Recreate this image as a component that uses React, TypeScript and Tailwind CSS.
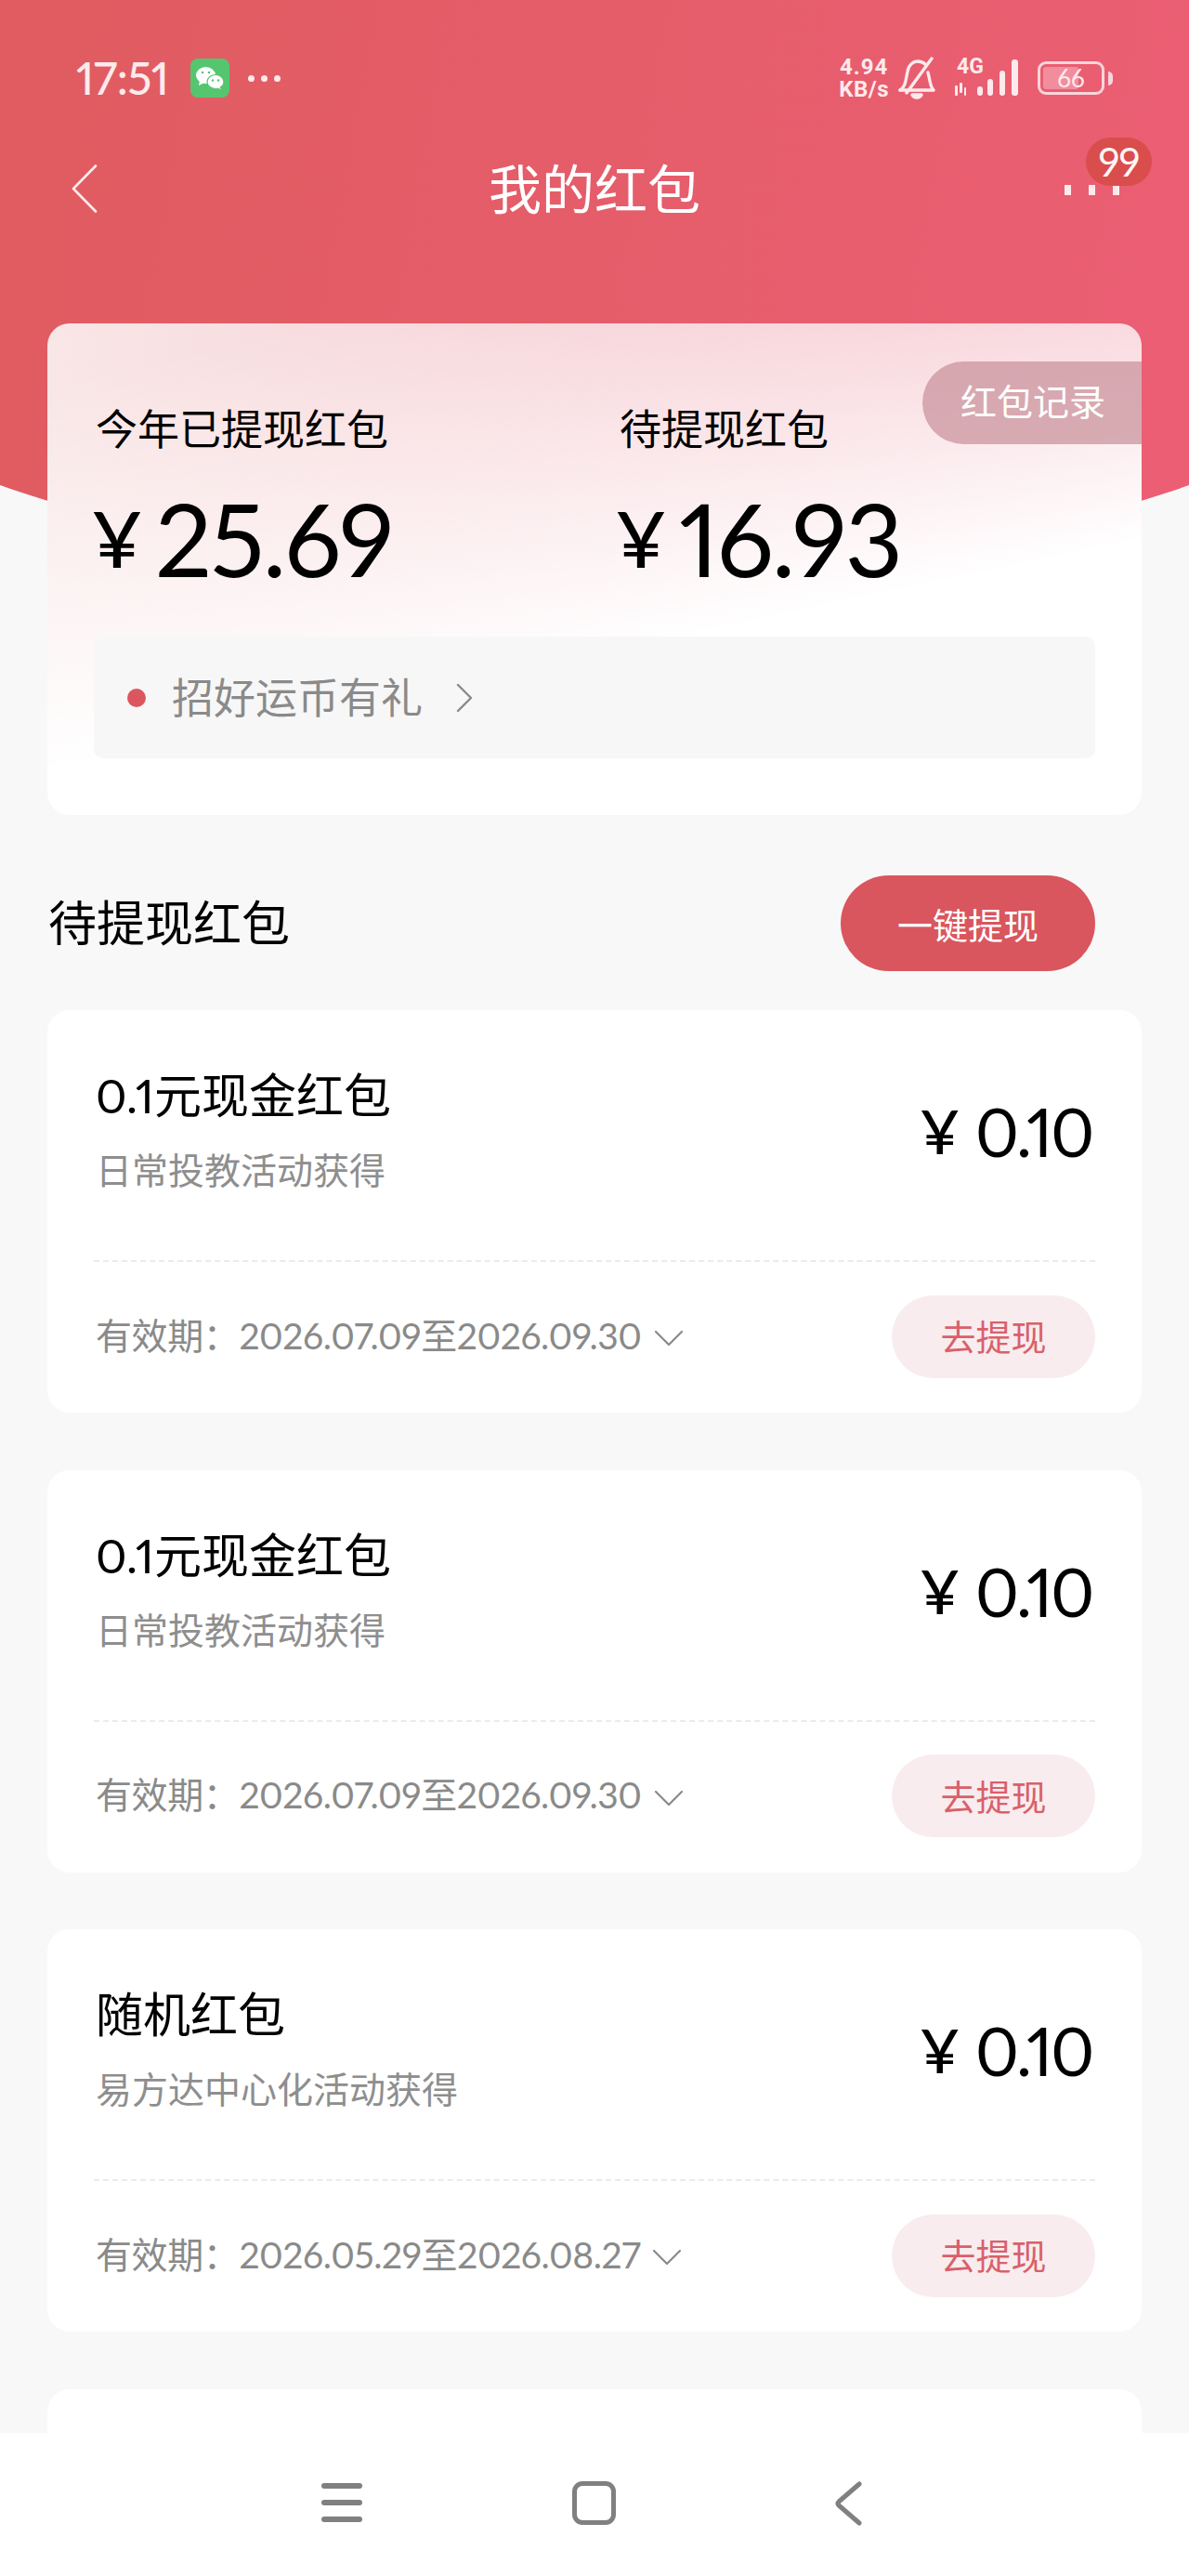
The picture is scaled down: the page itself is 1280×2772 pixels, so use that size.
const latin = "font-['Lato','Noto_Sans_CJK_SC',sans-serif] proportional-nums";

const packets = [
  { name: "0.1元现金红包", source: "日常投教活动获得", period: "2026.07.09至2026.09.30" },
  { name: "0.1元现金红包", source: "日常投教活动获得", period: "2026.07.09至2026.09.30" },
  { name: "随机红包", source: "易方达中心化活动获得", period: "2026.05.29至2026.08.27" },
];

function WeChatIcon() {
  return (
    <svg viewBox="0 0 42 42" className="size-[42px]">
      <rect width="42" height="42" rx="8" fill="#55c66f" />
      <ellipse cx="16.5" cy="18" rx="10.5" ry="9" fill="#fff" />
      <path d="M10 24l-1 5 6-3z" fill="#fff" />
      <ellipse cx="27" cy="25" rx="9" ry="7.5" fill="#fff" stroke="#55c66f" strokeWidth="1.2" />
      <path d="M31 30l2 3-5-2z" fill="#fff" />
      <circle cx="13" cy="15" r="1.3" fill="#55c66f" />
      <circle cx="20" cy="15" r="1.3" fill="#55c66f" />
      <circle cx="24" cy="23.5" r="1.2" fill="#55c66f" />
      <circle cx="30" cy="23.5" r="1.2" fill="#55c66f" />
    </svg>
  );
}

function StatusBar() {
  return (
    <div className="flex h-[168px] items-center justify-between pl-[82px] pr-[82px] text-[#fdeaec]">
      <div className="flex items-center">
        <span className={`${latin} text-[48px] font-medium leading-none tracking-[-0.5px]`}>17:51</span>
        <span className="ml-[24px]">
          <WeChatIcon />
        </span>
        <span className="ml-[20px] flex gap-[7px]">
          <i className="size-[7px] rounded-full bg-[#fdeaec]" />
          <i className="size-[7px] rounded-full bg-[#fdeaec]" />
          <i className="size-[7px] rounded-full bg-[#fdeaec]" />
        </span>
      </div>
      <div className="flex items-center">
        <div className="flex flex-col items-center font-['Roboto',sans-serif] font-bold">
          <span className="text-[24px] leading-[24px] tracking-[1px]">4.94</span>
          <span className="text-[24px] leading-[24px] tracking-[0.5px]">KB/s</span>
        </div>
        <svg viewBox="0 0 40 46" className="ml-[10px] h-[46px] w-[40px]" fill="none" stroke="#fdeaec" strokeWidth="3.4" strokeLinecap="round" strokeLinejoin="round">
          <path d="M2 36c3-2 5-5 6-10l2-10c1-7 6-11 11-11 3 0 6 1 8 3" />
          <path d="M32 17l2 9c1 5 2 8 4 10H2" />
          <path d="M36 2L9 39" />
          <path d="M15 41h10c-1 2-3 3-5 3s-4-1-5-3z" fill="#fdeaec" />
        </svg>
        <div className="relative ml-[20px] h-[44px] w-[76px]">
          <span className="absolute left-[3px] top-[-2px] font-['Roboto',sans-serif] text-[23px] font-bold leading-[24px]">4G</span>
          <svg viewBox="0 0 76 44" className="h-[44px] w-[76px]" fill="#fdeaec">
            <rect x="1" y="30" width="3" height="11" rx="1" />
            <rect x="6" y="27" width="3" height="11" rx="1" />
            <rect x="11" y="32" width="2" height="9" rx="1" />
            <rect x="25" y="31" width="6" height="10" rx="3" />
            <rect x="36" y="23" width="6" height="18" rx="3" />
            <rect x="49" y="14" width="6" height="27" rx="3" />
            <rect x="62" y="2" width="7" height="39" rx="3" />
          </svg>
        </div>
        <div className="ml-[14px] flex items-center">
          <div className="relative flex h-[36px] w-[72px] items-center justify-center overflow-hidden rounded-[9px] border-[3px] border-[#fbd5da]">
            <i className="absolute inset-y-[3px] left-[3px] w-[38px] rounded-[3px] bg-[#f28d9e]" />
            <span className={`relative ${latin} text-[26px] leading-none`}>66</span>
          </div>
          <i className="ml-[4px] h-[15px] w-[5px] rounded-r-full bg-[#fbd5da]" />
        </div>
      </div>
    </div>
  );
}

function NavBar() {
  return (
    <div className="relative flex h-[70px] items-center justify-center text-white">
      <svg viewBox="0 0 28 52" className="absolute left-[77px] top-[9px] h-[52px] w-[28px]" fill="none" stroke="#fdeaec" strokeWidth="2.6" strokeLinecap="round" strokeLinejoin="round">
        <path d="M26 1.5L2 26l24 24.5" />
      </svg>
      <h1 className="mb-[6px] text-[57px] leading-none">我的红包</h1>
      <span className="absolute left-[1146px] top-[31px] h-[11px] w-[7px] bg-[#fdeaec]" />
      <span className="absolute left-[1172px] top-[31px] h-[11px] w-[7px] bg-[#fdeaec]" />
      <span className="absolute left-[1198px] top-[31px] h-[11px] w-[7px] bg-[#fdeaec]" />
      <span className={`absolute left-[1169px] top-[-20px] flex h-[52px] w-[71px] items-center justify-center rounded-full bg-[#d94e4c] ${latin} text-[42px] leading-none tracking-[-1px] text-[#fff5f5]`}>
        99
      </span>
    </div>
  );
}

function Amount({ value }: { value: string }) {
  return (
    <div className={`-ml-[5px] mt-[37px] flex h-[110px] items-center ${latin} text-black`}>
      <span className="mr-[13px] text-[84px] font-medium leading-none">¥</span>
      <span className="text-[108px] font-normal leading-none tracking-[-2px]">{value}</span>
    </div>
  );
}

function PacketCard({ name, source, period }: { name: string; source: string; period: string }) {
  return (
    <div className={`h-[433px] rounded-[24px] bg-white px-[50px] ${latin}`}>
      <div className="flex h-[271px] items-center justify-between border-b-2 border-dashed border-[#ebebeb]">
        <div className="-mt-[10px] pl-[2px]">
          <p className="text-[51px] leading-[60px] text-black">{name}</p>
          <p className="mt-[25px] text-[39px] leading-[50px] text-[#8e8e8e]">{source}</p>
        </div>
        <div className="flex items-center pb-[9px] pr-[3px] text-black">
          <span className="mr-[16px] text-[66px] font-medium leading-none">¥</span>
          <span className="text-[72px] font-normal leading-none tracking-[-2.5px]">0.10</span>
        </div>
      </div>
      <div className="flex h-[160px] items-center justify-between pl-[2px]">
        <div className="mb-[2px] flex items-center text-[39px] tracking-[-0.4px] text-[#8a8a8a]">
          <span>有效期：</span>
          <span>{period}</span>
          <svg viewBox="0 0 32 18" className="ml-[13px] mt-[6px] h-[18px] w-[32px]" fill="none" stroke="#8a8a8a" strokeWidth="2.2" strokeLinecap="round" strokeLinejoin="round">
            <path d="M2 2l14 14L30 2" />
          </svg>
        </div>
        <button className="flex h-[89px] w-[219px] items-center justify-center rounded-full bg-[#f8ecee] pb-[3px] font-['Noto_Sans_CJK_SC',sans-serif] text-[38px] text-[#d9606a]">
          去提现
        </button>
      </div>
    </div>
  );
}

export default function App() {
  return (
    <div className="relative h-[2772px] w-[1280px] overflow-hidden bg-[#f8f8f8] font-['Noto_Sans_CJK_SC',sans-serif]">
      <div className="absolute inset-x-0 top-0 h-[610px] overflow-hidden">
        <div className="ml-[-160px] h-[610px] w-[1600px] rounded-b-[800px_220px] bg-[linear-gradient(100deg,#e05c61_15%,#eb5e73_85%)]" />
      </div>

      <div className="relative">
        <StatusBar />
        <NavBar />

        <div className="mx-[51px] mt-[110px] h-[529px] overflow-hidden rounded-[24px] bg-[linear-gradient(168deg,#ffffff00_8%,#ffffff_62%),linear-gradient(90deg,#f9e6e6,#f4bdc7)]">
          <div className="relative px-[50px] pt-[85px]">
            <button className="absolute right-0 top-[41px] flex h-[89px] w-[236px] items-center rounded-l-full bg-[#c88f98]/70 pb-[6px] pl-[41px] text-[39px] text-white">
              红包记录
            </button>
            <div className="grid grid-cols-[564px_1fr] pl-[2px]">
              <div>
                <p className="text-[45px] leading-[54px] text-black">今年已提现红包</p>
                <Amount value="25.69" />
              </div>
              <div>
                <p className="text-[45px] leading-[54px] text-black">待提现红包</p>
                <Amount value="16.93" />
              </div>
            </div>
            <div className="mt-[51px] flex h-[131px] items-center rounded-[10px] bg-[#f7f7f7] pl-[36px] text-[45px] text-[#8a8a8a]">
              <i className="size-[20px] rounded-full bg-[#dc5660]" />
              <span className="mb-[4px] ml-[28px]">招好运币有礼</span>
              <svg viewBox="0 0 20 32" className="ml-[35px] h-[32px] w-[20px]" fill="none" stroke="#8a8a8a" strokeWidth="2.4" strokeLinecap="round" strokeLinejoin="round">
                <path d="M3 2l14 14L3 30" />
              </svg>
            </div>
          </div>
        </div>

        <div className="ml-[52px] mr-[53px] mt-[65px] flex h-[103px] items-center justify-between pr-[48px]">
          <h2 className="mb-[6px] text-[52px] leading-none text-black">待提现红包</h2>
          <button className="flex h-[103px] w-[274px] items-center justify-center rounded-full bg-[#d9565e] text-[38px] text-white">
            一键提现
          </button>
        </div>

        <div className="mx-[51px] mt-[42px] flex flex-col gap-[61.5px]">
          {packets.map((packet, index) => (
            <PacketCard key={index} {...packet} />
          ))}
          <div className="h-[433px] rounded-[24px] bg-white" />
        </div>
      </div>

      <div className="absolute inset-x-0 bottom-0 flex h-[154px] items-center justify-center bg-white">
        <div className="relative h-[50px] w-[1280px]">
          <div className="absolute left-[346px] top-[2px] flex w-[44px] flex-col gap-[12px]">
            <i className="h-[6px] rounded-full bg-[#808080]" />
            <i className="h-[6px] rounded-full bg-[#808080]" />
            <i className="h-[6px] rounded-full bg-[#808080]" />
          </div>
          <i className="absolute left-[616px] top-0 h-[47px] w-[47px] rounded-[11px] border-[5px] border-[#808080]" />
          <svg viewBox="0 0 30 48" className="absolute left-[898px] top-0 h-[48px] w-[30px]" fill="none" stroke="#808080" strokeWidth="5" strokeLinecap="round" strokeLinejoin="round">
            <path d="M27 3L5 22q-2 2 0 4l22 19" />
          </svg>
        </div>
      </div>
    </div>
  );
}
